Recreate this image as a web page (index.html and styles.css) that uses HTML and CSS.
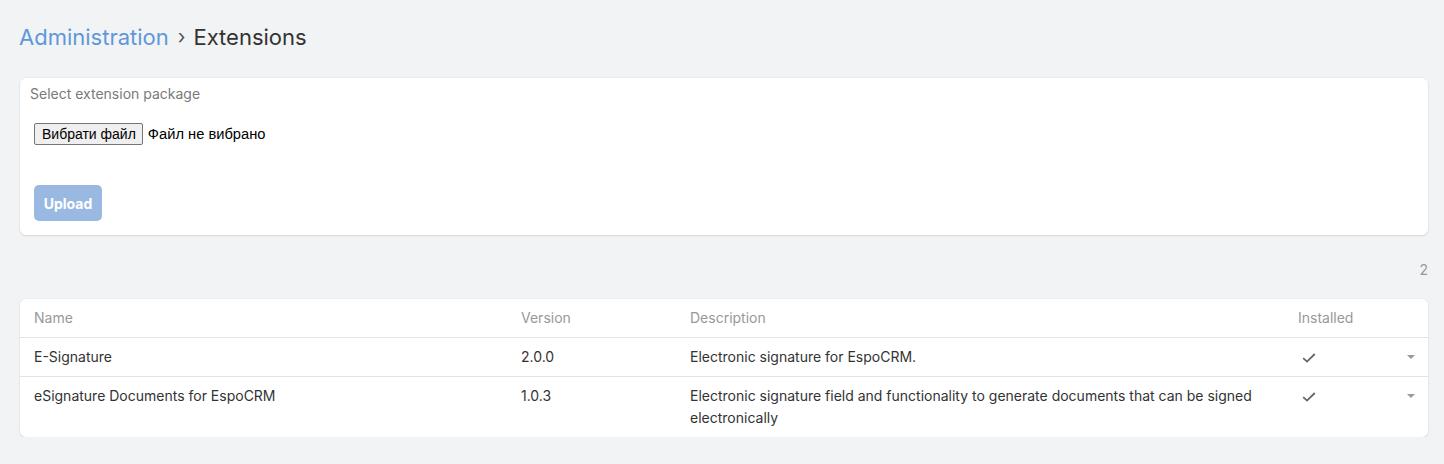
FILE: index.html
```html
<!DOCTYPE html>
<html lang="en">
<head>
<meta charset="utf-8">
<title>Extensions</title>
<link rel="stylesheet" href="styles.css">
</head>
<body>
<div class="page">
  <h1 class="breadcrumb"><a class="crumb-link" href="#">Administration</a><span class="sep">›</span><span class="crumb-current">Extensions</span></h1>

  <div class="card upload-card">
    <div class="card-heading">Select extension package</div>
    <div class="card-body">
      <div class="file-row"><span class="file-btn">Вибрати файл</span><span class="file-label">Файл не вибрано</span></div>
      <button class="btn-upload" disabled>Upload</button>
    </div>
  </div>

  <div class="count-row"><span class="count">2</span></div>

  <div class="card table-card">
    <table class="list">
      <colgroup>
        <col class="c-name"><col class="c-version"><col class="c-desc"><col class="c-installed"><col class="c-actions">
      </colgroup>
      <thead>
        <tr><th>Name</th><th>Version</th><th>Description</th><th>Installed</th><th></th></tr>
      </thead>
      <tbody>
        <tr>
          <td>E-Signature</td><td>2.0.0</td><td>Electronic signature for EspoCRM.</td>
          <td><svg class="check" width="14" height="12" viewBox="0 0 14 12"><path d="M1.2 6.2 L5 9.6 L12.8 2" fill="none" stroke="#666" stroke-width="1.8"/></svg></td>
          <td class="act"><span class="caret"></span></td>
        </tr>
        <tr>
          <td>eSignature Documents for EspoCRM</td><td>1.0.3</td><td>Electronic signature field and functionality to generate documents that can be signed electronically</td>
          <td><svg class="check" width="14" height="12" viewBox="0 0 14 12"><path d="M1.2 6.2 L5 9.6 L12.8 2" fill="none" stroke="#666" stroke-width="1.8"/></svg></td>
          <td class="act"><span class="caret"></span></td>
        </tr>
      </tbody>
    </table>
  </div>
</div>
</body>
</html>
```
FILE: styles.css
```css
* { box-sizing: border-box; }
html, body { margin: 0; padding: 0; }
body {
  background: #f2f3f5;
  font-family: Inter, "Noto Sans", sans-serif;
  font-size: 14px;
  line-height: 22px;
  color: #333;
}
.page { padding: 22px 16px 0 20px; }
.breadcrumb {
  margin: 0 0 0 -1px;
  font-size: 22px;
  font-weight: 400;
  line-height: 30px;
  display: flex;
  align-items: center;
}
.crumb-link { color: #5f98d8; text-decoration: none; }
.sep { color: #555; font-size: 20px; margin: 0 8px 0 9px; }
.crumb-current { color: #333; }

.card {
  background: #fff;
  border-radius: 6px;
  box-shadow: 0 1px 2px rgba(0,0,0,0.10), 0 0 0 1px rgba(0,0,0,0.02);
}
.upload-card { margin-top: 26px; }
.card-heading {
  padding: 5px 10px 0 10px;
  color: #7a7a7a;
  line-height: 22px;
}
.card-body { padding: 18px 14px 14px 14px; }
.file-row {
  display: flex;
  align-items: center;
  font-family: "Liberation Sans", Arial, sans-serif;
  font-size: 14px;
  color: #000;
  height: 22px;
}
.file-btn {
  display: inline-block;
  height: 22px;
  line-height: 20px;
  padding: 0 6px 0 7px;
  background: #efefef;
  border: 1px solid #767676;
  border-radius: 2px;
  margin-right: 5px;
}
.file-label { font-size: 14.7px; }
.btn-upload {
  margin-top: 40px;
  display: block;
  height: 36px;
  width: 68px;
  padding: 0;
  border: 0;
  border-radius: 5px;
  background: #9ab9e2;
  color: #fff;
  font-family: Inter, sans-serif;
  font-weight: 700;
  font-size: 14px;
}

.count-row {
  display: flex;
  justify-content: flex-end;
  margin-top: 24px;
  height: 22px;
  color: #999;
}
.table-card { margin-top: 18px; overflow: hidden; }
.list {
  width: 100%;
  border-collapse: collapse;
  table-layout: fixed;
}
.c-name { width: 487px; }
.c-version { width: 169px; }
.c-desc { width: 608px; }
.c-installed { width: 106px; }
.c-actions { width: 38px; }
.list th {
  text-align: left;
  font-weight: 400;
  color: #999;
  padding: 8px 14px;
  height: 38px;
}
.list td {
  padding: 8px 14px;
  vertical-align: top;
  border-top: 1px solid #e3e3e3;
  color: #333;
}
.check { display: block; margin: 6px 0 0 4px; }
.act { padding: 8px 0 !important; }
.caret {
  display: block;
  width: 0; height: 0;
  margin: 9px 0 0 17px;
  border-left: 4px solid transparent;
  border-right: 4px solid transparent;
  border-top: 4px solid #999;
}
```
